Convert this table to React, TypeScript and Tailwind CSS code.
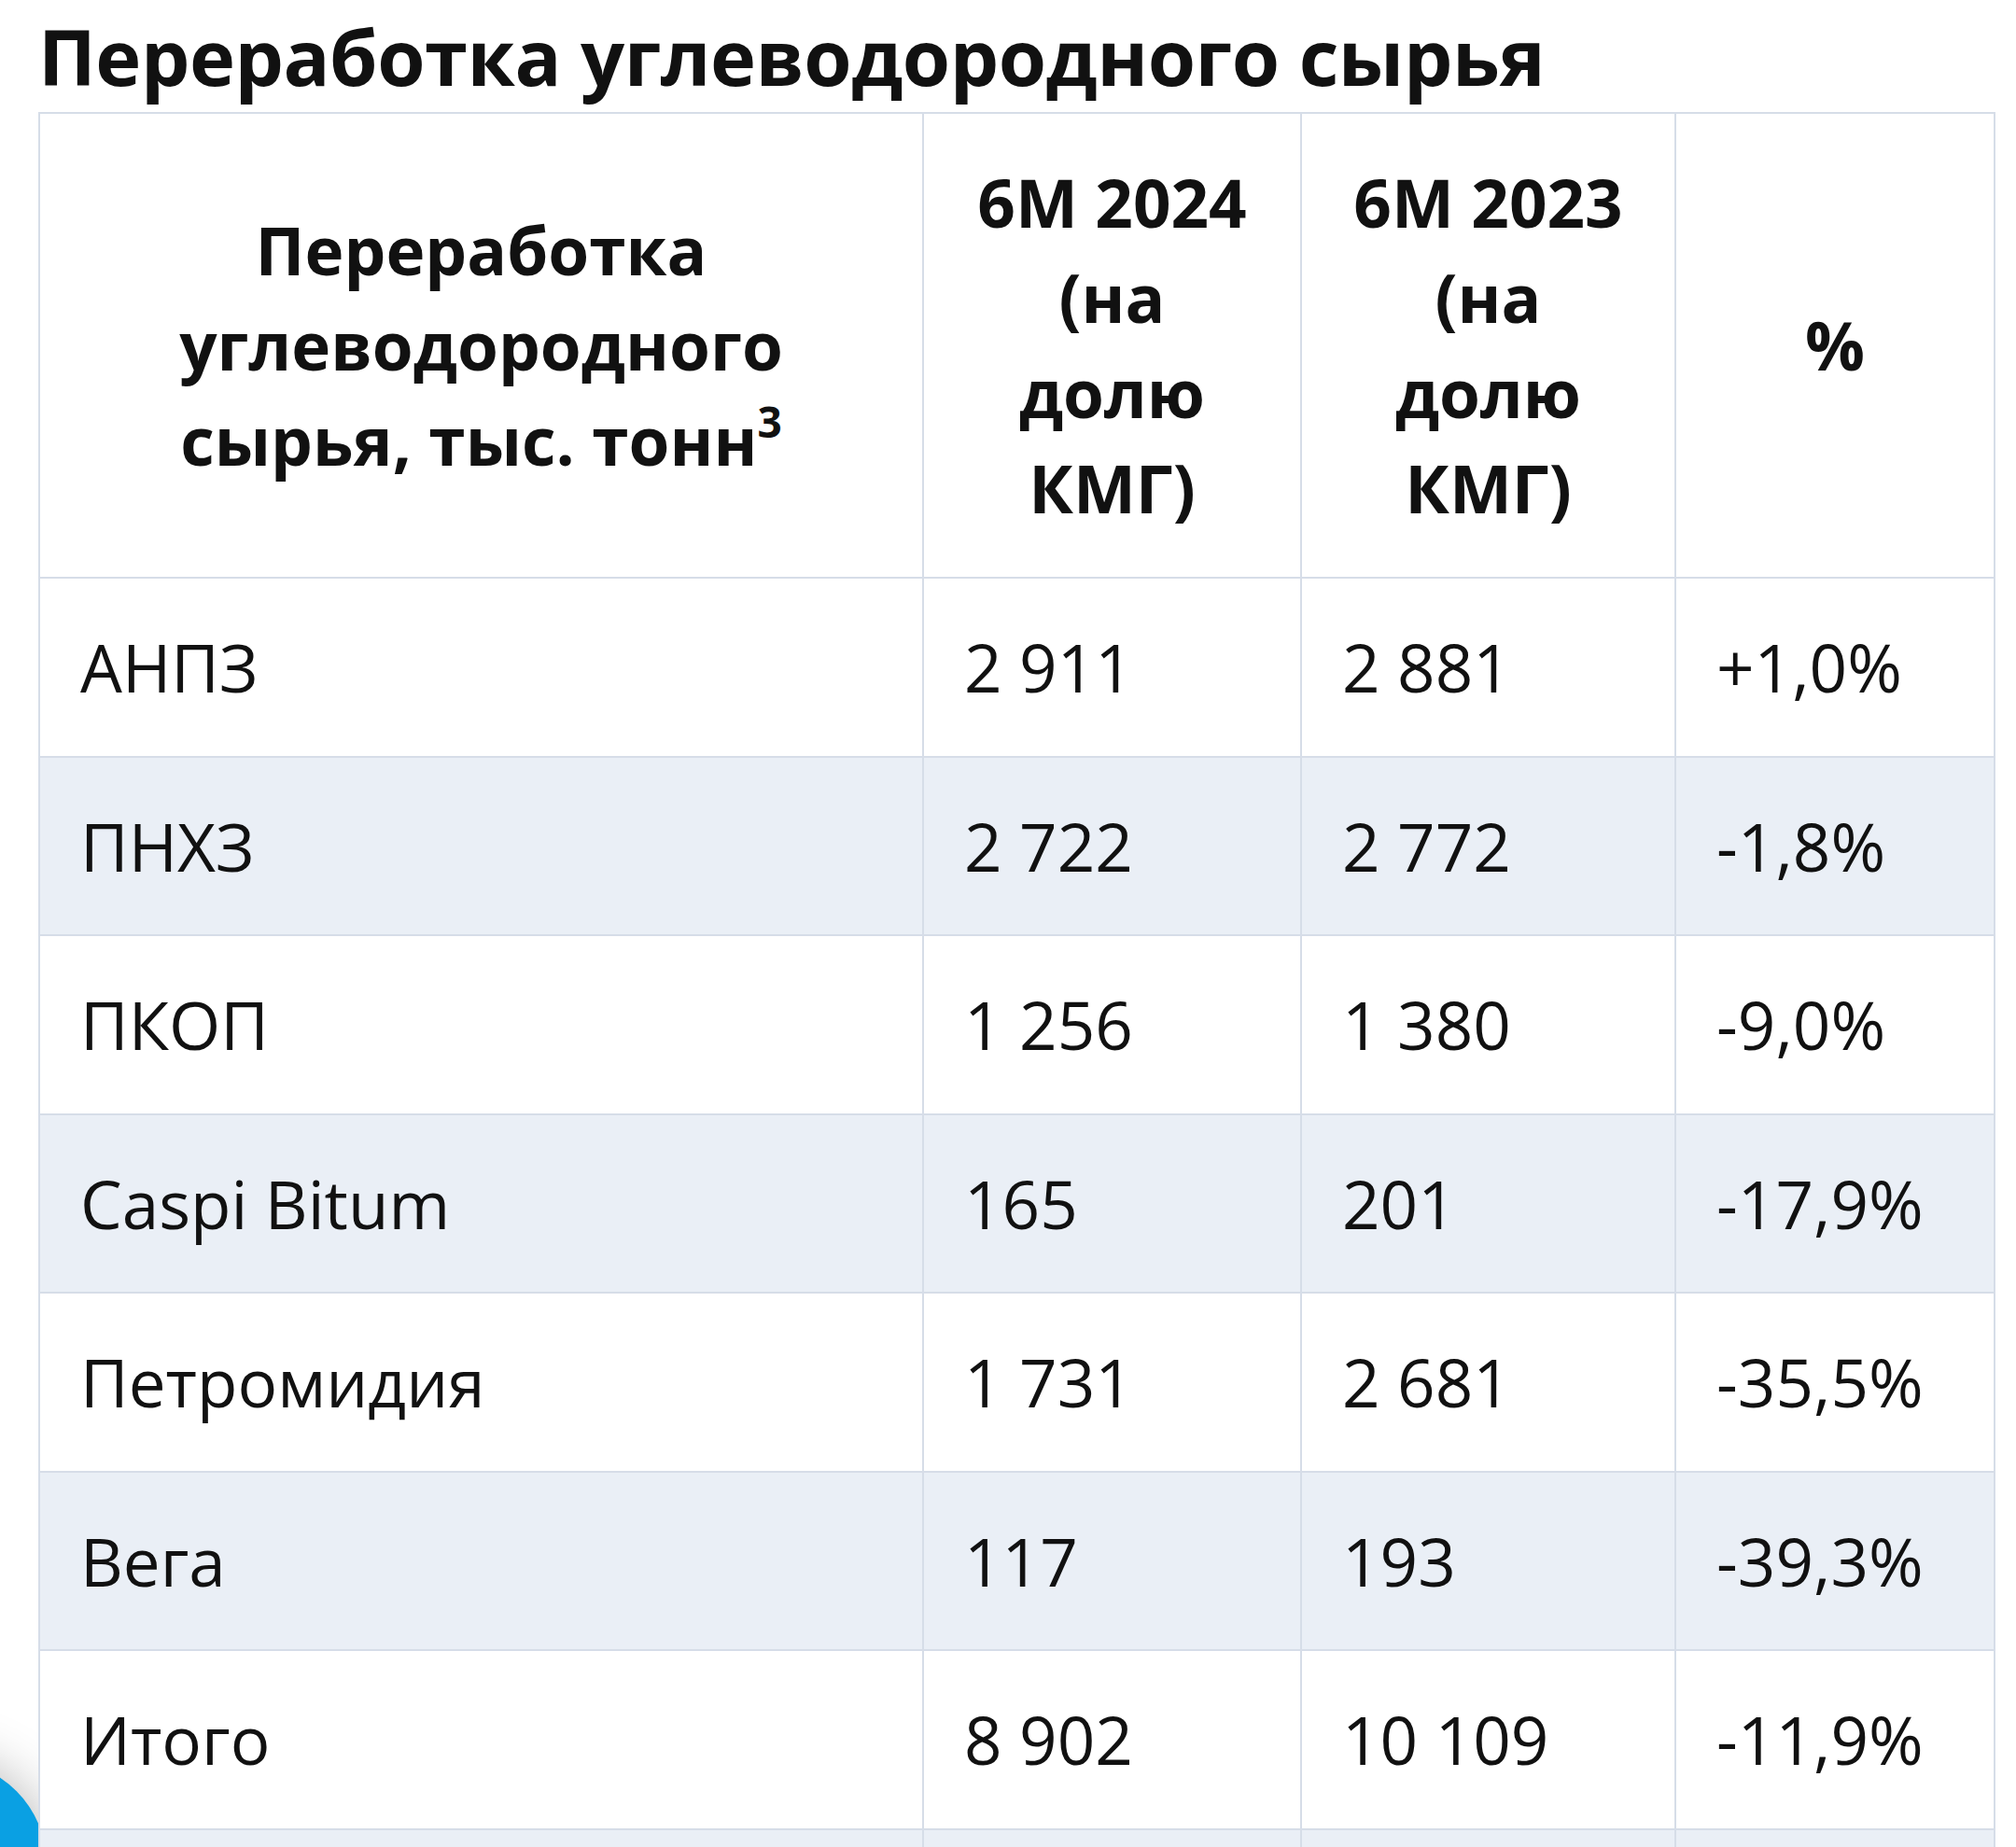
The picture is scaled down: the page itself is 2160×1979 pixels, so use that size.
const rows = [
  { name: 'АНПЗ', y2024: '2 911', y2023: '2 881', pct: '+1,0%' },
  { name: 'ПНХЗ', y2024: '2 722', y2023: '2 772', pct: '-1,8%' },
  { name: 'ПКОП', y2024: '1 256', y2023: '1 380', pct: '-9,0%' },
  { name: 'Caspi Bitum', y2024: '165', y2023: '201', pct: '-17,9%' },
  { name: 'Петромидия', y2024: '1 731', y2023: '2 681', pct: '-35,5%' },
  { name: 'Вега', y2024: '117', y2023: '193', pct: '-39,3%' },
  { name: 'Итого', y2024: '8 902', y2023: '10 109', pct: '-11,9%' },
  { name: '\u00a0', y2024: '\u00a0', y2023: '\u00a0', pct: '\u00a0' },
];

const cell = 'border-2 border-[#d6dde8] px-[43px] py-[44px]';

export default function App() {
  return (
    <div className="relative h-[1979px] overflow-hidden bg-white font-['Open_Sans',sans-serif] text-[#111]">
      {/* floating chat button, mostly off-screen */}
      <div className="absolute left-[-170px] top-[1887px] w-[220px] h-[220px] rounded-full bg-[#0aa0e3] shadow-[0_0_60px_rgba(0,0,0,0.3)]" />

      <div className="pl-[41px] pr-[22px] pt-[20px]">
        <h2 className="text-[83px] leading-[80px] font-bold tracking-[-0.5px]">
          Переработка углеводородного сырья
        </h2>

        <table className="relative z-10 mt-[20px] w-full table-fixed border-collapse bg-white text-[71px] leading-[102px]">
          <colgroup>
            <col className="w-[947px]" />
            <col className="w-[405px]" />
            <col className="w-[401px]" />
            <col />
          </colgroup>
          <thead>
            <tr className="font-bold text-center align-middle">
              <th className={cell}>
                Переработка
                <br />
                углеводородного
                <br />
                сырья, тыс. тонн<sup className="text-[46px] relative top-[-30px]">3</sup>
              </th>
              <th className={cell}>
                6M 2024
                <br />
                (на
                <br />
                долю
                <br />
                КМГ)
              </th>
              <th className={cell}>
                6M 2023
                <br />
                (на
                <br />
                долю
                <br />
                КМГ)
              </th>
              <th className={cell}>%</th>
            </tr>
          </thead>
          <tbody className="leading-[101.5px]">
            {rows.map((r, i) => (
              <tr key={i} className={i % 2 === 1 ? 'bg-[#eaeff6]' : 'bg-white'}>
                <td className={cell}>{r.name}</td>
                <td className={cell}>{r.y2024}</td>
                <td className={cell}>{r.y2023}</td>
                <td className={cell}>{r.pct}</td>
              </tr>
            ))}
          </tbody>
        </table>
      </div>
    </div>
  );
}
